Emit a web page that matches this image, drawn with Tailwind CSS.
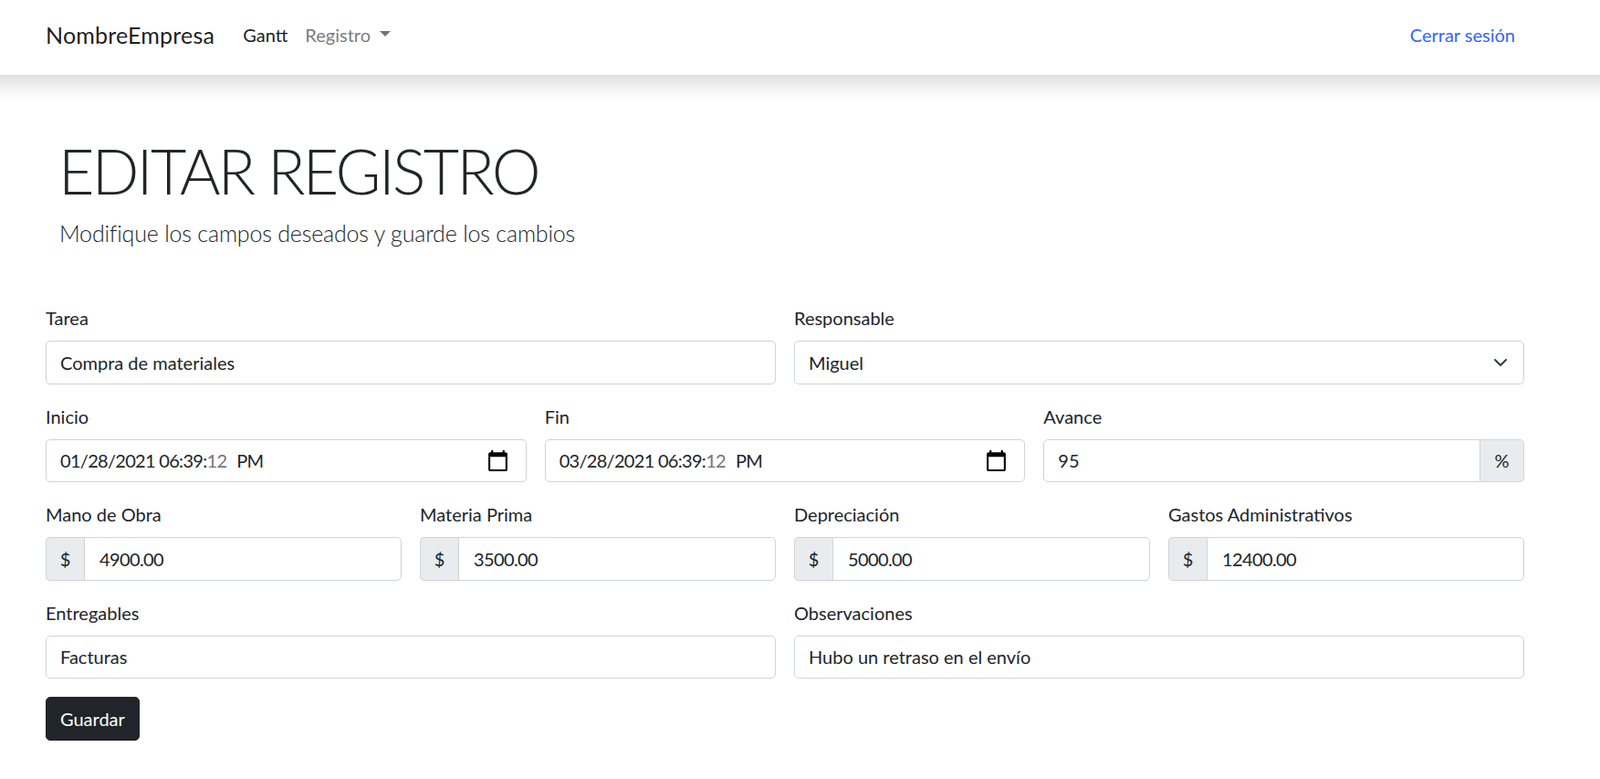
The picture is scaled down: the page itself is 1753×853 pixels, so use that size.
<!doctype html><html><head><meta charset="utf-8"><script src="https://cdn.jsdelivr.net/npm/@tailwindcss/browser@4"></script></head>
<body class="bg-white text-[#212529] font-['Lato',sans-serif] text-[20px] leading-[30px]">
<nav class="h-[82px] bg-white shadow-[0_-20px_20px_30px_rgba(0,0,0,0.15)] pl-[50px] pr-[93px] flex items-center">
  <a class="text-[25px] leading-[38px] mr-[31px] tracking-[0.2px] text-black/90 -mt-[7px]">NombreEmpresa</a>
  <div class="flex items-center gap-[19px] -mt-[7px]">
    <a class="text-black/90">Gantt</a>
    <a class="text-black/55 flex items-center">Registro<span class="ml-[10px] w-0 h-0 border-x-[6px] border-x-transparent border-t-[6px] border-t-black/55 mb-[2px]"></span></a>
  </div>
  <a class="ml-auto text-[#3366ff] -mt-[7px]">Cerrar sesión</a>
</nav>
<main class="pl-[50px] pr-[83px]">
  <header class="pt-[60px] h-[251px] pl-[14px]">
    <h1 class="text-[68px] leading-[90px] font-light tracking-[-2.65px] uppercase">Editar registro</h1>
    <p class="text-[25px] leading-[37px] font-light mt-[5px] ml-[1px] tracking-[-0.18px] text-[#212529]">Modifique los campos deseados y guarde los cambios</p>
  </header>
  <form class="flex flex-col gap-[20px]">
    <div class="grid grid-cols-2 gap-[20px]">
      <label class="block"><span class="block mb-[10px]">Tarea</span><input value="Compra de materiales" class="block w-full h-[47.5px] px-[15px] rounded-[5px] border border-[#ced4da] outline-none"></label>
      <label class="block"><span class="block mb-[10px]">Responsable</span><span class="block relative"><select class="block w-full h-[47.5px] pl-[15px] rounded-[5px] border border-[#ced4da] appearance-none outline-none bg-white"><option>Miguel</option></select><svg class="absolute right-[18px] top-[16px] w-[16px] h-[16px]" viewBox="0 0 16 16" fill="none" stroke="#343a40" stroke-width="2" stroke-linecap="round" stroke-linejoin="round"><path d="M2 5l6 6 6-6"/></svg></span></label>
    </div>
    <div class="grid grid-cols-3 gap-[20px]">
      <div><span class="block mb-[10px]">Inicio</span><div class="flex items-center justify-between h-[47.5px] pl-[15px] pr-[18px] rounded-[5px] border border-[#ced4da] tracking-[-0.7px]"><span>01/28/2021 06:39:<span class="text-[#757575]">12</span><span class="ml-[11px]">PM</span></span><svg class="w-[25px] h-[25px]" viewBox="0 0 24 24" fill="#000"><path d="M20 3h-1V1h-2v2H7V1H5v2H4c-1.1 0-2 .9-2 2v16c0 1.1.9 2 2 2h16c1.1 0 2-.9 2-2V5c0-1.1-.9-2-2-2zm0 18H4V8h16v13z"/></svg></div></div>
      <div><span class="block mb-[10px]">Fin</span><div class="flex items-center justify-between h-[47.5px] pl-[15px] pr-[18px] rounded-[5px] border border-[#ced4da] tracking-[-0.7px]"><span>03/28/2021 06:39:<span class="text-[#757575]">12</span><span class="ml-[11px]">PM</span></span><svg class="w-[25px] h-[25px]" viewBox="0 0 24 24" fill="#000"><path d="M20 3h-1V1h-2v2H7V1H5v2H4c-1.1 0-2 .9-2 2v16c0 1.1.9 2 2 2h16c1.1 0 2-.9 2-2V5c0-1.1-.9-2-2-2zm0 18H4V8h16v13z"/></svg></div></div>
      <label class="block"><span class="block mb-[10px]">Avance</span><span class="flex h-[47.5px]"><input value="95" class="min-w-0 flex-1 px-[15px] rounded-l-[5px] border border-[#ced4da] outline-none"><span class="flex items-center justify-center w-[48px] bg-[#e9ecef] border border-l-0 border-[#ced4da] rounded-r-[5px]">%</span></span></label>
    </div>
    <div class="grid grid-cols-4 gap-[20px]">
      <label class="block"><span class="block mb-[10px]">Mano de Obra</span><span class="flex h-[47.5px]"><span class="flex items-center justify-center w-[42px] bg-[#e9ecef] border border-r-0 border-[#ced4da] rounded-l-[5px]">$</span><input value="4900.00" class="min-w-0 flex-1 px-[16px] tracking-[-0.6px] rounded-r-[5px] border border-[#ced4da] outline-none"></span></label>
      <label class="block"><span class="block mb-[10px]">Materia Prima</span><span class="flex h-[47.5px]"><span class="flex items-center justify-center w-[42px] bg-[#e9ecef] border border-r-0 border-[#ced4da] rounded-l-[5px]">$</span><input value="3500.00" class="min-w-0 flex-1 px-[16px] tracking-[-0.6px] rounded-r-[5px] border border-[#ced4da] outline-none"></span></label>
      <label class="block"><span class="block mb-[10px]">Depreciación</span><span class="flex h-[47.5px]"><span class="flex items-center justify-center w-[42px] bg-[#e9ecef] border border-r-0 border-[#ced4da] rounded-l-[5px]">$</span><input value="5000.00" class="min-w-0 flex-1 px-[16px] tracking-[-0.6px] rounded-r-[5px] border border-[#ced4da] outline-none"></span></label>
      <label class="block"><span class="block mb-[10px]">Gastos Administrativos</span><span class="flex h-[47.5px]"><span class="flex items-center justify-center w-[42px] bg-[#e9ecef] border border-r-0 border-[#ced4da] rounded-l-[5px]">$</span><input value="12400.00" class="min-w-0 flex-1 px-[16px] tracking-[-0.6px] rounded-r-[5px] border border-[#ced4da] outline-none"></span></label>
    </div>
    <div class="grid grid-cols-2 gap-[20px]">
      <label class="block"><span class="block mb-[10px]">Entregables</span><input value="Facturas" class="block w-full h-[47.5px] px-[15px] rounded-[5px] border border-[#ced4da] outline-none"></label>
      <label class="block"><span class="block mb-[10px]">Observaciones</span><input value="Hubo un retraso en el envío" class="block w-full h-[47.5px] px-[15px] rounded-[5px] border border-[#ced4da] outline-none"></label>
    </div>
    <div><button type="button" class="h-[47.5px] px-[15px] rounded-[5px] bg-[#212529] border border-[#212529] text-white">Guardar</button></div>
  </form>
</main>
</body></html>
